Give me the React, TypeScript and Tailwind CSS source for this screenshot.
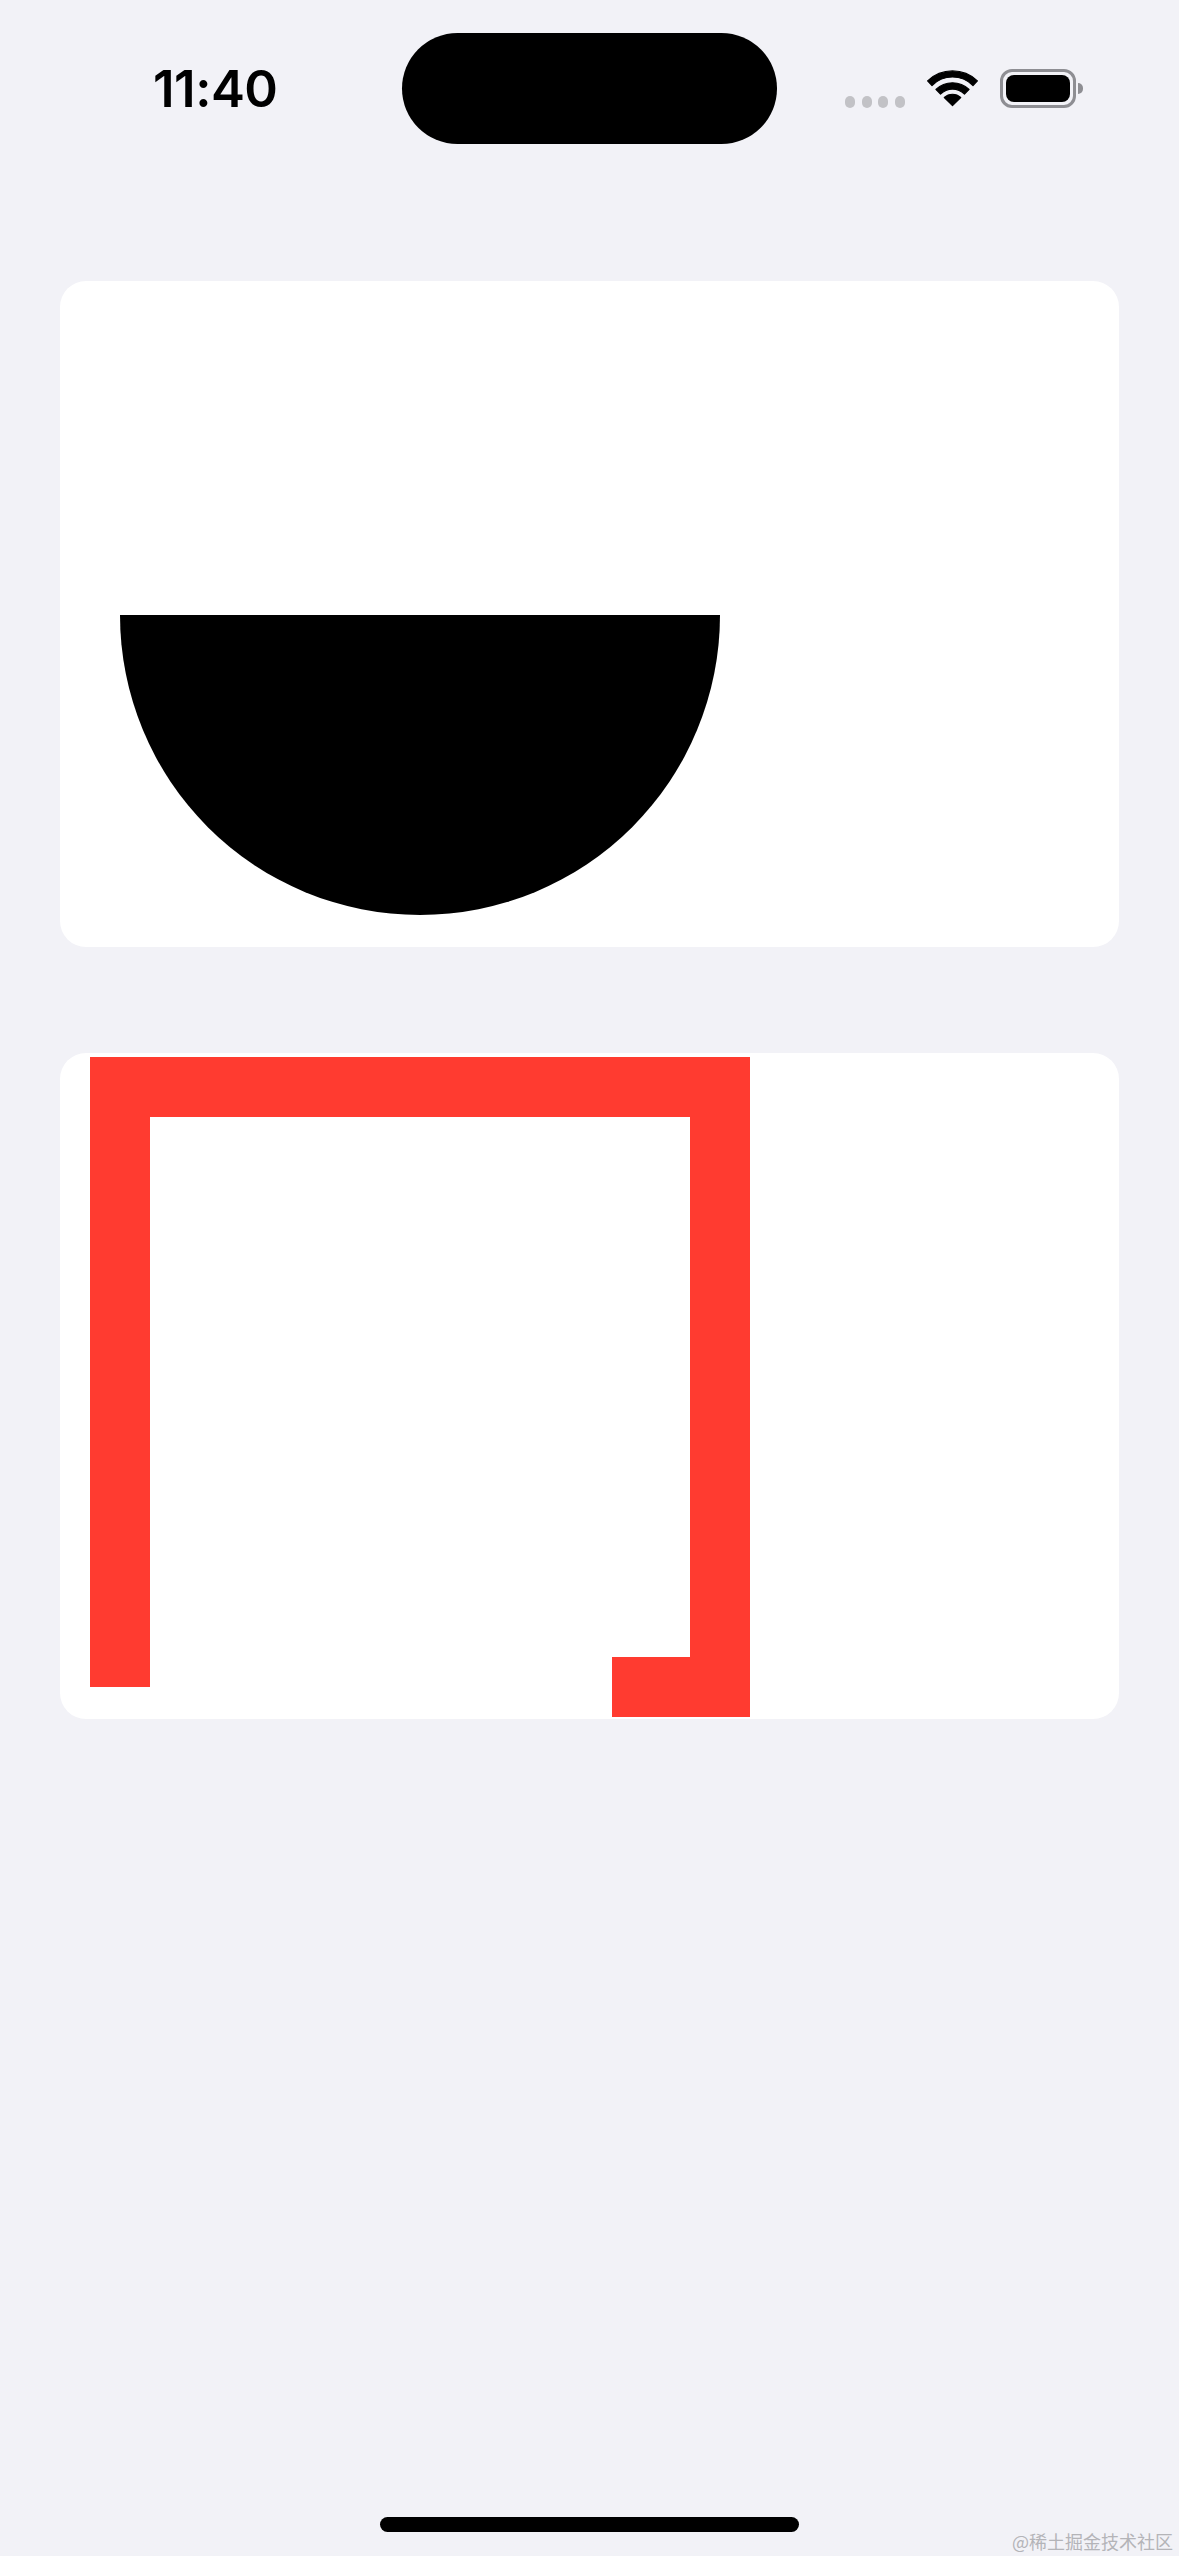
import React from "react";

function Wifi() {
  return (
    <svg width="51" height="37" viewBox="0 0 51 37" className="block">
      <g fill="#000" stroke="#000" strokeWidth="1.2" strokeLinejoin="round">
        <path d="M0.6 10.9 A36 36 0 0 1 50.4 10.9 L46 15.5 A29 29 0 0 0 5 15.5 Z" />
        <path d="M8.9 19.4 A24 24 0 0 1 42.1 19.4 L37.5 24 A17 17 0 0 0 13.5 24 Z" />
        <path d="M25.5 35.6 L17.3 27.5 A12 12 0 0 1 33.7 27.5 Z" />
      </g>
    </svg>
  );
}

function Battery() {
  return (
    <div className="flex items-center">
      <div className="w-[76px] h-[39px] rounded-[12px] border-[3px] border-[#8e8e93] p-[3px] flex">
        <div className="flex-1 rounded-[8px] bg-black" />
      </div>
      <div className="w-[5px] h-[11px] ml-[2px] rounded-r-full bg-[#8e8e93]" />
    </div>
  );
}

export default function App() {
  return (
    <div
      className="relative w-[1179px] h-[2556px] bg-[#f2f2f7] flex flex-col overflow-hidden"
      style={{ fontFamily: "Inter, 'Noto Sans', sans-serif" }}
    >
      {/* status bar */}
      <div className="flex items-center pt-[33px] h-[144px]">
        <div className="w-[402px] h-[111px] flex items-center pl-[153px]">
          <span className="text-[51px] leading-none font-semibold text-black tracking-[-0.5px]">
            11:40
          </span>
        </div>
        <div className="w-[375px] h-[111px] rounded-full bg-black" />
        <div className="flex items-center ml-[68px]">
          <div className="flex gap-[6.5px] mt-[26px]">
            <div className="w-[10px] h-[12px] rounded-[5px] bg-[#c2c2c6]" />
            <div className="w-[10px] h-[12px] rounded-[5px] bg-[#c2c2c6]" />
            <div className="w-[10px] h-[12px] rounded-[5px] bg-[#c2c2c6]" />
            <div className="w-[10px] h-[12px] rounded-[5px] bg-[#c2c2c6]" />
          </div>
          <div className="ml-[22px]">
            <Wifi />
          </div>
          <div className="ml-[22px]">
            <Battery />
          </div>
        </div>
      </div>

      {/* card 1 */}
      <div className="mt-[137px] ml-[60px] w-[1059px] h-[666px] rounded-[26px] bg-white pl-[60px] pt-[334px]">
        <svg width="600" height="300" viewBox="0 0 600 300" className="block">
          <path d="M0 0 H600 A300 300 0 0 1 0 0 Z" fill="#000" />
        </svg>
      </div>

      {/* card 2 */}
      <div className="mt-[106px] ml-[60px] w-[1059px] h-[666px] rounded-[26px] bg-white pl-[30px] pt-[4px]">
        <svg width="660" height="660" viewBox="0 0 660 660" className="block">
          <polygon
            points="0,0 660,0 660,660 522,660 522,600 600,600 600,60 60,60 60,630 0,630"
            fill="#ff3b30"
          />
        </svg>
      </div>

      <div className="flex-1" />

      {/* home indicator */}
      <div className="mx-auto mb-[24px] w-[419px] h-[15px] rounded-full bg-black" />

      <div
        className="absolute right-[6px] bottom-[6px] text-[18px] leading-none text-[#b4b4b8]"
        style={{ fontFamily: "'Noto Sans CJK SC', 'Noto Sans', sans-serif" }}
      >
        @稀土掘金技术社区
      </div>
    </div>
  );
}
